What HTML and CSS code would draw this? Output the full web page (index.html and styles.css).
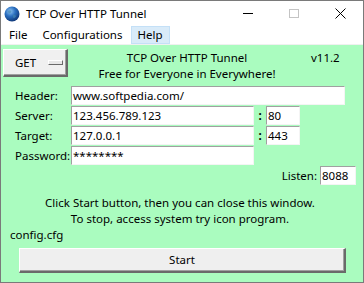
FILE: index.html
```html
<!DOCTYPE html>
<html lang="en">
<head>
  <meta charset="UTF-8" />
  <title>TCP Over HTTP Tunnel</title>
  <link rel="stylesheet" href="styles.css">
</head>
<body>

<div class="window">
  <div class="titlebar">
    <svg class="app-icon" width="16" height="16" viewBox="0 0 16 16">
      <defs>
        <radialGradient id="globe" cx="0.38" cy="0.32" r="0.75">
          <stop offset="0" stop-color="#8fc4f2"/>
          <stop offset="0.45" stop-color="#2a6fc0"/>
          <stop offset="1" stop-color="#0b2f6e"/>
        </radialGradient>
      </defs>
      <circle cx="8" cy="8" r="7.5" fill="url(#globe)"/>
      <path d="M4 5 Q6 3.5 7.5 5 Q7 7 5.5 7.5 Q4 7 4 5 Z" fill="#4f8fb8" opacity="0.8"/>
      <path d="M9 8.5 Q11 8 12 10 Q11 12.5 9.5 12 Q8.5 10.5 9 8.5 Z" fill="#3f7fae" opacity="0.8"/>
    </svg>
    <span class="title">TCP Over HTTP Tunnel</span>
    <div class="controls">
      <span class="ctl"><span class="min"></span></span>
      <span class="ctl"><span class="max"></span></span>
      <span class="ctl">
        <svg width="11" height="11" viewBox="0 0 11 11"><path d="M0.5 0.5 L10.5 10.5 M10.5 0.5 L0.5 10.5" stroke="#000" stroke-width="1"/></svg>
      </span>
    </div>
  </div>

  <div class="menubar">
    <span class="menu-item">File</span>
    <span class="menu-item">Configurations</span>
    <span class="menu-item hover">Help</span>
  </div>

  <div class="client">
    <div class="top-row">
      <div class="method-btn">
        <span>GET</span>
        <span class="indicator"></span>
      </div>
      <div class="heading">
        <div>TCP Over HTTP Tunnel</div>
        <div>Free for Everyone in Everywhere!</div>
      </div>
      <div class="version">v11.2</div>
    </div>

    <div class="fields">
      <div class="field-row">
        <label class="field-label">Header:</label>
        <div class="input wide">www.softpedia.com/</div>
      </div>
      <div class="field-row">
        <label class="field-label">Server:</label>
        <div class="input mid">123.456.789.123</div>
        <span class="colon">:</span>
        <div class="input port">80</div>
      </div>
      <div class="field-row">
        <label class="field-label">Target:</label>
        <div class="input mid">127.0.0.1</div>
        <span class="colon">:</span>
        <div class="input port">443</div>
      </div>
      <div class="field-row">
        <label class="field-label">Password:</label>
        <div class="input mid">********</div>
      </div>
      <div class="listen-row">
        <label>Listen:</label>
        <div class="input listen">8088</div>
      </div>
    </div>

    <div class="notes">
      <p class="info">Click Start button, then you can close this window.</p>
      <p class="info">To stop, access system try icon program.</p>
    </div>
    <p class="config">config.cfg</p>

    <div class="start-btn">Start</div>
  </div>
</div>

</body>
</html>
```

FILE: styles.css
```css
* {
  margin: 0; padding: 0; box-sizing: border-box;
}
body {
  font-family: 'Noto Sans', 'Open Sans', sans-serif;
  font-size: 11.5px;
  color: #000;
  background: #fff;
}

.window {
  width: 364px;
  height: 283px;
  border: 1px solid #7a7a7a;
  display: flex;
  flex-direction: column;
  background: #fff;
}

/* title bar */
.titlebar {
  height: 25px;
  display: flex;
  align-items: center;
}
.app-icon {
  margin-left: 3px;
  margin-right: 6px;
}
.title {
  line-height: 1;
}
.controls {
  margin-left: auto;
  display: flex;
  height: 100%;
}
.ctl {
  width: 46px;
  height: 100%;
  display: flex;
  align-items: center;
  justify-content: center;
}
.min {
  width: 10px;
  height: 1px;
  background: #000;
}
.max {
  width: 10px;
  height: 9px;
  border: 1px solid #c4c4c4;
}

/* menu */
.menubar {
  height: 18px;
  display: flex;
  align-items: center;
  padding-left: 1px;
  border-bottom: 1px solid #f0f0f0;
  box-sizing: content-box;
}
.menu-item {
  padding: 0 6px;
  height: 18px;
  line-height: 16px;
  border: 1px solid transparent;
  margin-right: 1px;
}
.menu-item.hover {
  background: #d9ebf9;
  border-color: #c4e0f7;
}

/* client area */
.client {
  flex: 1;
  background: #aafcbf;
  padding-top: 4px;
  display: flex;
  flex-direction: column;
}
.top-row {
  display: flex;
  height: 28px;
}
.method-btn {
  margin-left: 2px;
  width: 65px;
  height: 28px;
  background: #f0f0f0;
  border-top: 1px solid #fff;
  border-left: 1px solid #fff;
  border-right: 2px solid #6a6a6a;
  border-bottom: 2px solid #6a6a6a;
  box-shadow: inset -1px -1px 0 #a0a0a0;
  display: flex;
  align-items: center;
  padding-left: 11px;
}
.indicator {
  margin-left: 12px;
  width: 15px;
  height: 5px;
  border-top: 1px solid #fff;
  border-left: 1px solid #fff;
  border-right: 1px solid #6a6a6a;
  border-bottom: 1px solid #6a6a6a;
  background: #e8e8e8;
}
.heading {
  flex: 1;
  text-align: center;
  line-height: 16px;
  padding-top: 1px;
}
.version {
  width: 57px;
  padding-left: 5px;
  padding-top: 1px;
  line-height: 16px;
}

/* form rows */
.fields {
  margin-top: 9px;
  padding-left: 14px;
  display: flex;
  flex-direction: column;
  gap: 1px;
}
.field-row {
  display: flex;
  align-items: center;
  height: 19px;
}
.field-label {
  width: 56px;
}
.input {
  height: 19px;
  background: #fff;
  border-top: 1px solid #a0a0a0;
  border-left: 1px solid #a0a0a0;
  border-right: 1px solid #f4f4f4;
  border-bottom: 1px solid #f4f4f4;
  padding-left: 1px;
  line-height: 17px;
  white-space: nowrap;
  overflow: hidden;
}
.input.wide { width: 274px; }
.input.mid { width: 183px; }
.input.port { width: 34px; }
.colon {
  width: 12px;
  text-align: center;
  font-weight: bold;
}
.listen-row {
  display: flex;
  justify-content: flex-end;
  align-items: center;
  gap: 3px;
  padding-right: 7px;
  height: 19px;
}
.input.listen { width: 36px; }

.notes {
  margin-top: 10px;
}
.info {
  text-align: center;
  line-height: 16px;
  padding-right: 4px;
}
.config {
  padding-left: 9px;
  line-height: 16px;
}

.start-btn {
  margin: 5px 17px 0 18px;
  height: 25px;
  background: #efefef;
  border-top: 1px solid #fff;
  border-left: 1px solid #fff;
  border-right: 2px solid #6a6a6a;
  border-bottom: 2px solid #6a6a6a;
  box-shadow: inset -1px -1px 0 #a0a0a0;
  text-align: center;
  line-height: 22px;
}
```
